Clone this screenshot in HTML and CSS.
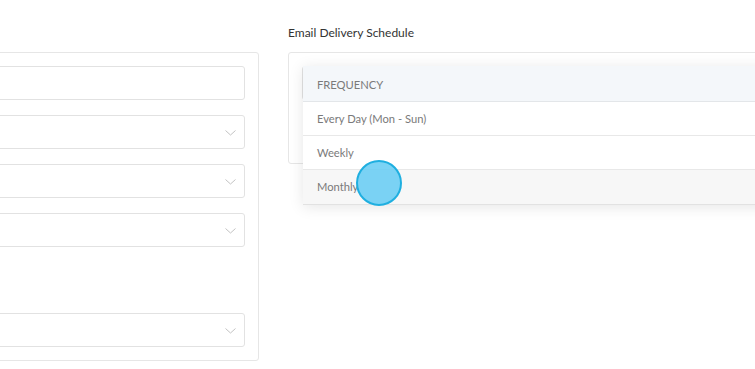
FILE: index.html
```html
<!DOCTYPE html>
<html>
<head>
<link rel="stylesheet" href="styles.css">
</head>
<body>

<div class="page">
  <!-- left settings column, cut off by the window -->
  <div class="column column-left">
    <div class="label">&nbsp;</div>
    <div class="panel panel-left">
      <div class="field"></div>
      <div class="field select">
        <svg class="chevron" width="11" height="6" viewBox="0 0 11 6"><polyline points="0.5,0.5 5.5,5 10.5,0.5"/></svg>
      </div>
      <div class="field select">
        <svg class="chevron" width="11" height="6" viewBox="0 0 11 6"><polyline points="0.5,0.5 5.5,5 10.5,0.5"/></svg>
      </div>
      <div class="field select">
        <svg class="chevron" width="11" height="6" viewBox="0 0 11 6"><polyline points="0.5,0.5 5.5,5 10.5,0.5"/></svg>
      </div>
      <div class="spacer"></div>
      <div class="field select">
        <svg class="chevron" width="11" height="6" viewBox="0 0 11 6"><polyline points="0.5,0.5 5.5,5 10.5,0.5"/></svg>
      </div>
    </div>
  </div>

  <!-- email schedule column -->
  <div class="column column-right">
    <div class="label">Email Delivery Schedule</div>
    <div class="panel panel-right">
      <div class="field select"></div>

      <div class="dropdown">
        <div class="dropdown-head">FREQUENCY</div>
        <div class="dropdown-item">Every Day (Mon - Sun)</div>
        <div class="dropdown-item">Weekly</div>
        <div class="dropdown-item hover">Monthly</div>
      </div>
    </div>
  </div>
</div>

<div class="cursor"></div>

</body>
</html>
```

FILE: styles.css
```css
/* email schedule settings, frequency dropdown open */

html, body {
  margin: 0;
  background: #fff;
  overflow: hidden;
}

body {
  font-family: Lato, "Open Sans", sans-serif;
  font-size: 11px;
  color: #333;
  width: 755px;
  height: 369px;
  position: relative;
}

.page {
  display: flex;
  gap: 29px;
  padding-top: 26px;
}

.column-left {
  width: 279px;
  margin-left: -20px;
  flex: none;
}

.column-right {
  width: 520px;
  flex: none;
}

.label {
  height: 14px;
  line-height: 14px;
  margin-bottom: 12px;
  font-size: 12px;
}

.panel {
  border: 1px solid #e6e6e6;
  border-radius: 3px;
  padding: 13px;
}

.panel-left {
  display: flex;
  flex-direction: column;
  gap: 15px;
}

.panel-right {
  position: relative;
  height: 84px;
}

.field {
  height: 32px;
  border: 1px solid #e2e2e2;
  border-radius: 3px;
  background: #fff;
  position: relative;
}

.spacer {
  height: 36px;
}

.chevron {
  position: absolute;
  right: 8px;
  top: 14px;
  fill: none;
  stroke: #c2c2c2;
  stroke-width: 1;
}

.dropdown {
  position: absolute;
  left: 14px;
  top: 13px;
  width: 520px;
  background: #fff;
  box-shadow: 0 2px 14px rgba(0, 0, 0, 0.1);
  font-size: 11.2px;
}

.dropdown-head {
  height: 35px;
  line-height: 38px;
  padding-left: 14px;
  background: #f4f7fa;
  color: #7a7a7a;
  border-bottom: 1px solid #e3e6e9;
}

.dropdown-item {
  height: 33px;
  line-height: 34px;
  padding-left: 14px;
  color: #7a7a7a;
  border-bottom: 1px solid #e8e8e8;
}

.dropdown-item.hover {
  height: 34px;
  background: #f7f7f7;
  border-bottom-color: #e2e2e2;
}

.cursor {
  position: absolute;
  left: 356px;
  top: 160px;
  width: 42px;
  height: 42px;
  border: 2px solid #1fafe0;
  border-radius: 50%;
  background: rgba(100, 203, 243, 0.85);
}
```
